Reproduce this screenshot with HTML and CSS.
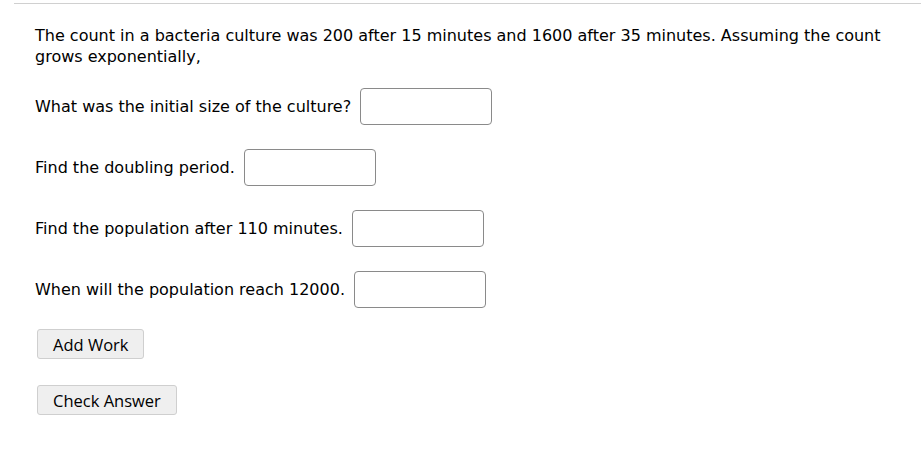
FILE: index.html
```html
<!DOCTYPE html>
<html>
<head>
<meta charset="utf-8">
<link rel="stylesheet" href="styles.css">
</head>
<body>
<div class="rule"></div>
<div class="content">
  <p class="question">The count in a bacteria culture was 200 after 15 minutes and 1600 after 35 minutes. Assuming the count grows exponentially,</p>
  <div class="row"><span class="label">What was the initial size of the culture?</span><input class="answer" type="text"></div>
  <div class="row"><span class="label">Find the doubling period.</span><input class="answer" type="text"></div>
  <div class="row"><span class="label">Find the population after 110 minutes.</span><input class="answer" type="text"></div>
  <div class="row"><span class="label">When will the population reach 12000.</span><input class="answer" type="text"></div>
  <div class="buttons">
    <button class="btn" type="button">Add Work</button>
    <button class="btn" type="button">Check Answer</button>
  </div>
</div>
</body>
</html>
```
FILE: styles.css
```css
html, body {
  margin: 0;
  padding: 0;
  background: #fff;
}
body {
  font-family: "DejaVu Sans", sans-serif;
  font-size: 16px;
  color: #000;
}
.rule {
  margin: 3px 0 0 14px;
  border-top: 1px solid #d0d0d0;
}
.content {
  padding: 0 0 0 35px;
}
.question {
  margin: 21px 0 0 0;
  line-height: 21px;
  max-width: 850px;
}
.row {
  display: flex;
  align-items: center;
  height: 37px;
  margin-top: 24px;
}
.row:first-of-type {
  margin-top: 21px;
}
.label {
  margin-right: 9px;
}
.answer {
  box-sizing: border-box;
  width: 132px;
  height: 37px;
  border: 1px solid #8a8a8a;
  border-radius: 4px;
  margin: 0;
  padding: 0 6px;
  background: #fff;
}
.buttons {
  display: flex;
  flex-direction: column;
  align-items: flex-start;
  gap: 26px;
  margin-top: 21px;
  padding-left: 2px;
}
.btn {
  box-sizing: border-box;
  height: 30px;
  padding: 0 15px;
  font-family: "Open Sans", sans-serif;
  font-size: 16.5px;
  color: #000;
  background: #efefef;
  border: 1px solid #cfcfcf;
  border-radius: 3px;
}
```
